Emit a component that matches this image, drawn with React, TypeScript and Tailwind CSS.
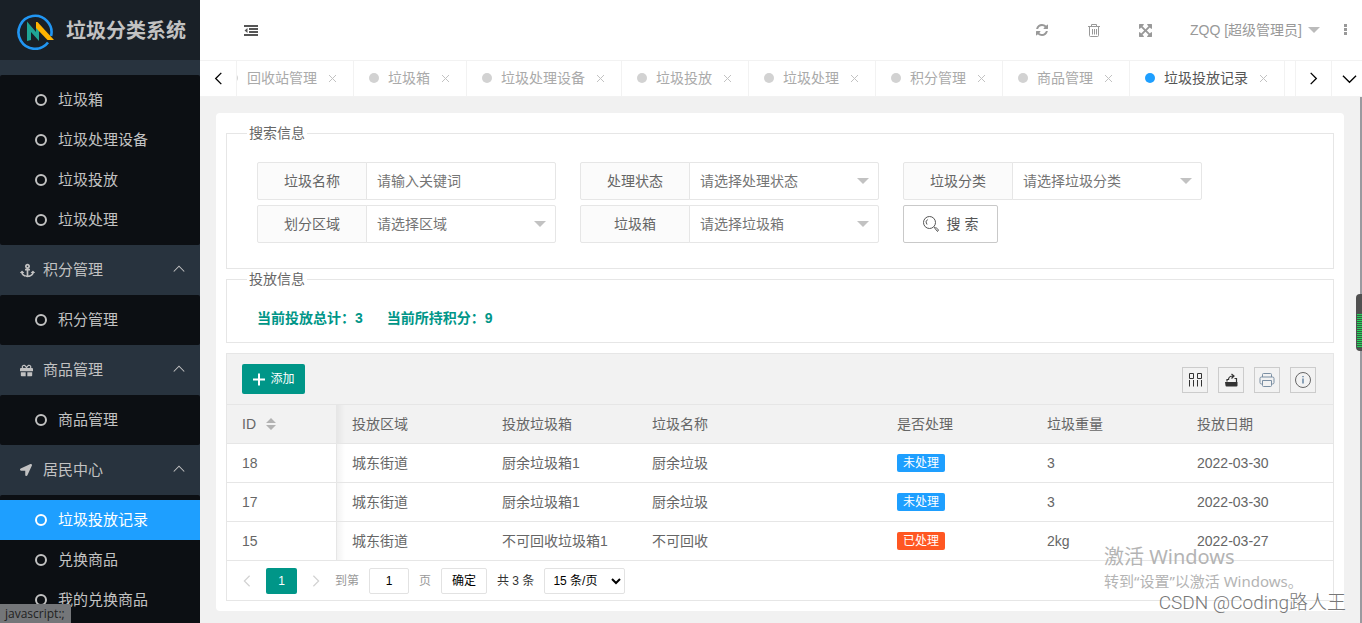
import React, { useState } from 'react';
import { FaAnchor, FaGift, FaLocationArrow } from 'react-icons/fa';

type MenuGroup = {
  title?: string;
  icon?: React.ReactNode;
  items: string[];
};

const menuGroups: MenuGroup[] = [
  { items: ['垃圾箱', '垃圾处理设备', '垃圾投放', '垃圾处理'] },
  { title: '积分管理', icon: <FaAnchor size={15} />, items: ['积分管理'] },
  { title: '商品管理', icon: <FaGift size={13} />, items: ['商品管理'] },
  { title: '居民中心', icon: <FaLocationArrow size={12} />, items: ['垃圾投放记录', '兑换商品', '我的兑换商品'] },
];

const tabs = ['回收站管理', '垃圾箱', '垃圾处理设备', '垃圾投放', '垃圾处理', '积分管理', '商品管理', '垃圾投放记录'];

const columns = [
  { title: '投放区域', width: 'w-[150px]' },
  { title: '投放垃圾箱', width: 'w-[150px]' },
  { title: '垃圾名称', width: '' },
  { title: '是否处理', width: 'w-[150px]' },
  { title: '垃圾重量', width: 'w-[150px]' },
  { title: '投放日期', width: 'w-[151px]' },
];

const records = [
  { id: 18, area: '城东街道', bin: '厨余垃圾箱1', name: '厨余垃圾', done: false, weight: '3', date: '2022-03-30' },
  { id: 17, area: '城东街道', bin: '厨余垃圾箱1', name: '厨余垃圾', done: false, weight: '3', date: '2022-03-30' },
  { id: 15, area: '城东街道', bin: '不可回收垃圾箱1', name: '不可回收', done: true, weight: '2kg', date: '2022-03-27' },
];

function Logo() {
  return (
    <svg width="38" height="38" viewBox="0 0 38 38" fill="none" className="shrink-0">
      <path d="M32 30.500A16.500 16.500 0 1 1 35.100 24" stroke="#2196f3" strokeWidth="2.600" />
      <path d="M11 9.500l9 10.500v-8l3 4v13l-8-9v8l-4 1z" fill="#1fa595" />
      <path d="M20 10h1.500L38 28h-6.500L20 16z" fill="#ffb300" />
    </svg>
  );
}

function Chevron({ d, size, className }: { d: string; size: number; className?: string }) {
  return (
    <svg width={size} height={size} viewBox="0 0 16 16" fill="none" stroke="currentColor" strokeWidth="1.4" className={className}>
      <path d={d} />
    </svg>
  );
}

const LEFT = 'M11 2L5 8l6 6';
const RIGHT = 'M5 2l6 6-6 6';
const DOWN = 'M1 5l7 7 7-7';
const UP = 'M1 10l7-7 7 7';

function RefreshIcon() {
  return (
    <svg width="12" height="12" viewBox="0 0 1536 1536" fill="currentColor">
      <path d="M1511 928q0 5-1 7-64 268-268 434.5T764 1536q-146 0-282.5-55T238 1324l-129 129q-19 19-45 19t-45-19-19-45V960q0-26 19-45t45-19h448q26 0 45 19t19 45-19 45l-137 137q71 66 161 102t187 36q134 0 250-65t186-179q11-17 53-117 8-23 30-23h192q13 0 22.5 9.5t9.5 22.5zm25-800v448q0 26-19 45t-45 19h-448q-26 0-45-19t-19-45 19-45l138-138Q969 256 768 256q-134 0-250 65T332 500q-11 17-53 117-8 23-30 23H50q-13 0-22.5-9.5T18 608v-7q65-268 270-434.5T768 0q146 0 284 55.5T1297 212l130-129q19-19 45-19t45 19 19 45z" />
    </svg>
  );
}

function ExpandIcon() {
  return (
    <svg width="13" height="13" viewBox="0 0 1536 1536" fill="currentColor">
      <path d="M1283 413L928 768l355 355 144-144q29-31 70-14 39 17 39 59v448q0 26-19 45t-45 19h-448q-42 0-59-40-17-39 14-69l144-144-355-355-355 355 144 144q31 30 14 69-17 40-59 40H64q-26 0-45-19t-19-45v-448q0-42 40-59 39-17 69 14l144 144 355-355-355-355-144 144q-19 19-45 19-12 0-24-5-40-17-40-59V64q0-26 19-45T64 0h448q42 0 59 40 17 39-14 69L413 253l355 355 355-355-144-144q-31-30-14-69 17-40 59-40h448q26 0 45 19t19 45v448q0 42-39 59-13 5-25 5-26 0-45-19z" />
    </svg>
  );
}

function TrashIcon() {
  return (
    <svg width="12" height="13" viewBox="0 0 12 13" fill="none" stroke="currentColor">
      <path d="M0 2.500h12M3.500 2.500v-2h5v2M1.500 3v8.500a1 1 0 0 0 1 1h7a1 1 0 0 0 1-1V3M4.500 5v5.500M6.500 5v5.500M8.500 5v5.500" />
    </svg>
  );
}

function Sidebar() {
  const [active, setActive] = useState('垃圾投放记录');

  return (
    <aside className="w-[200px] shrink-0 overflow-hidden bg-[#28333e] text-[15px] text-[#c2c2c2]">
      <div className="flex h-[60px] items-center gap-3 bg-[#192027] pt-[2px] pl-4">
        <Logo />
        <h1 className="text-xl font-bold whitespace-nowrap">垃圾分类系统</h1>
      </div>
      <nav className="pt-[15px]">
        {menuGroups.map((group) => (
          <div key={group.title ?? 'top'}>
            {group.title && (
              <button className="flex h-[50px] w-full items-center pr-[15px] pl-5">
                <span className="w-[23px]">{group.icon}</span>
                {group.title}
                <Chevron d={UP} size={12} className="ml-auto" />
              </button>
            )}
            <ul className="rounded-xs bg-[#0c0f13] py-[5px]">
              {group.items.map((item) => (
                <li key={item}>
                  <a
                    href="#"
                    onClick={() => setActive(item)}
                    className={`flex h-10 items-center gap-[11px] pl-[35px] ${active === item ? 'bg-[#1e9fff] text-white' : ''}`}
                  >
                    <span className="size-3 rounded-full border-2 border-current" />
                    {item}
                  </a>
                </li>
              ))}
            </ul>
          </div>
        ))}
      </nav>
    </aside>
  );
}

function Header() {
  return (
    <header className="flex h-[60px] shrink-0 items-center bg-white pr-[14px] pl-11 text-[#999]">
      <button aria-label="收起菜单" className="pt-px text-[#555]">
        <svg width="14" height="11" viewBox="0 0 14 11" fill="currentColor">
          <path d="M0 0h14v2H0zM5 3h9v2H5zM5 6h9v2H5zM0 9h14v2H0zM3.500 3v5L0.500 5.500z" />
        </svg>
      </button>
      <div className="ml-auto flex items-center">
        <button aria-label="刷新" className="mr-10"><RefreshIcon /></button>
        <button aria-label="清理" className="mr-[39px]"><TrashIcon /></button>
        <button aria-label="全屏" className="mr-[38px]"><ExpandIcon /></button>
        <button className="flex items-center gap-[6px] text-sm">
          ZQQ [超级管理员]
          <span className="border-x-[6px] border-t-[6px] border-x-transparent border-t-[#bbb]" />
        </button>
        <button aria-label="更多" className="ml-6">
          <svg width="4" height="12" viewBox="0 0 4 12" fill="currentColor">
            <path d="M0 0h3v3H0zM0 4h3v3H0zM0 8h3v3H0z" />
          </svg>
        </button>
      </div>
    </header>
  );
}

function TabBar() {
  const [current, setCurrent] = useState('垃圾投放记录');

  return (
    <div className="flex h-[37px] shrink-0 border-y border-[#f2f2f2] bg-white text-sm text-black">
      <button aria-label="向左" className="flex w-[37px] shrink-0 items-center justify-center border-r border-[#f2f2f2]">
        <Chevron d={LEFT} size={15} />
      </button>
      <div className="flex flex-1 overflow-hidden">
        <ul className="-ml-6 flex">
          {tabs.map((tab) => (
            <li key={tab} className="flex items-center border-r border-[#f2f2f2] pr-4 pb-[2px] pl-[15px]">
              <button
                onClick={() => setCurrent(tab)}
                className={`flex items-center gap-[9px] whitespace-nowrap ${current === tab ? 'text-[#555]' : 'text-[#aaa]'}`}
              >
                <span className={`size-[10px] rounded-full ${current === tab ? 'bg-[#1e9fff]' : 'bg-[#d2d2d2]'}`} />
                {tab}
              </button>
              <button aria-label={`关闭${tab}`} className="ml-[11px] pt-[2px] text-[#c2c2c2]">
                <svg width="9" height="9" viewBox="0 0 9 9" fill="none" stroke="currentColor">
                  <path d="M1 1l7 7M8 1L1 8" />
                </svg>
              </button>
            </li>
          ))}
        </ul>
      </div>
      <button aria-label="向右" className="flex w-9 shrink-0 items-center justify-center border-l border-[#f2f2f2]">
        <Chevron d={RIGHT} size={15} />
      </button>
      <button aria-label="标签操作" className="flex w-[31px] shrink-0 items-center justify-center border-l border-[#f2f2f2] pl-1">
        <Chevron d={DOWN} size={15} />
      </button>
    </div>
  );
}

function Field({ label, id, children }: { label: string; id: string; children: React.ReactNode }) {
  return (
    <div className="flex h-[38px] w-[299px]">
      <label htmlFor={id} className="flex w-[110px] items-center justify-center rounded-l-xs border border-[#e6e6e6] bg-[#fbfbfb]">
        {label}
      </label>
      {children}
    </div>
  );
}

function SelectField({ label, id, placeholder }: { label: string; id: string; placeholder: string }) {
  return (
    <Field label={label} id={id}>
      <div className="relative -ml-px flex-1">
        <select id={id} className="h-full w-full appearance-none rounded-r-xs border border-[#e6e6e6] bg-white pl-[10px] text-[#757575]">
          <option>{placeholder}</option>
        </select>
        <span className="pointer-events-none absolute top-4 right-[10px] border-x-[6px] border-t-[6px] border-x-transparent border-t-[#c2c2c2]" />
      </div>
    </Field>
  );
}

function SearchPanel() {
  return (
    <fieldset className="border border-[#e6e6e6] pb-[25px] pl-[30px]">
      <legend className="-ml-[10px] px-[2px] leading-5">搜索信息</legend>
      <div className="mt-[19px] flex flex-wrap gap-x-6 gap-y-[5px] pr-[120px]">
        <Field label="垃圾名称" id="keyword">
          <input
            id="keyword"
            placeholder="请输入关键词"
            className="-ml-px w-0 flex-1 rounded-r-xs border border-[#e6e6e6] px-[10px] placeholder:text-[#757575]"
          />
        </Field>
        <SelectField label="处理状态" id="status" placeholder="请选择处理状态" />
        <SelectField label="垃圾分类" id="category" placeholder="请选择垃圾分类" />
        <SelectField label="划分区域" id="area" placeholder="请选择区域" />
        <SelectField label="垃圾箱" id="bin" placeholder="请选择垃圾箱" />
        <button className="flex h-[38px] w-[95px] items-center justify-center gap-2 rounded-xs border border-[#c9c9c9] bg-white text-[#555]">
          <svg width="16" height="16" viewBox="0 0 16 16" fill="none" stroke="currentColor">
            <circle cx="6.500" cy="6.500" r="6" />
            <path d="M4.500 3.500a3.500 3.500 0 0 0-.5 5M11 11l1.500 1M12 12.500l1-1 2.500 2.500-1 1.500z" />
          </svg>
          搜 索
        </button>
      </div>
    </fieldset>
  );
}

function StatsPanel() {
  return (
    <fieldset className="border border-[#e6e6e6] pl-[30px]">
      <legend className="-ml-[10px] px-[2px] leading-5">投放信息</legend>
      <div className="flex gap-6 pt-[19px] pb-[14px] leading-5 font-bold text-[#009688]">
        <span>当前投放总计：3</span>
        <span>当前所持积分：9</span>
      </div>
    </fieldset>
  );
}

const toolButtons = [
  {
    label: '筛选列',
    icon: (
      <svg width="14" height="14" viewBox="0 0 14 14" fill="none" stroke="#333">
        <path d="M1.500 .500h4v5h-4zM9.500 .500h4v5h-4zM1.500 7v6.500M5.500 7v6.500M9.500 7v6.500M13.500 7v6.500" />
      </svg>
    ),
  },
  {
    label: '导出',
    icon: (
      <svg width="14" height="14" viewBox="0 0 14 14" fill="#333">
        <path d="M1 9h12.500v3.500a1 1 0 0 1-1 1h-10a1 1 0 0 1-1-1z" />
        <path d="M3 8.500V6.500h2M10.500 5.500h2v3.500M4.500 7c0-3 1.500-4 4.500-4M7.500 1L10 3 7.500 5.500" fill="none" stroke="#333" strokeWidth="1.200" />
      </svg>
    ),
  },
  {
    label: '打印',
    icon: (
      <svg width="16" height="16" viewBox="0 0 16 16" fill="none" stroke="#7b8fa3">
        <path d="M3.500 5V2.500a1 1 0 0 1 1-1h7a1 1 0 0 1 1 1V5M3.500 12h-1a1.500 1.500 0 0 1-1.500-1.500v-4A1.500 1.500 0 0 1 2.500 5h11A1.500 1.500 0 0 1 15 6.500v4a1.500 1.500 0 0 1-1.500 1.500h-1M3.500 8.500h9v5a1 1 0 0 1-1 1h-7a1 1 0 0 1-1-1z" />
      </svg>
    ),
  },
  {
    label: '提示',
    icon: (
      <svg width="16" height="16" viewBox="0 0 16 16" fill="none" stroke="#666">
        <circle cx="8" cy="8" r="7.500" />
        <path d="M8 6.500v5M8 4v1.200" stroke="#5d7f9e" strokeWidth="1.400" />
      </svg>
    ),
  },
];

function RecordTable() {
  const idCell =
    'relative border-r border-b border-[#e6e6e6] px-[15px] text-left font-normal after:absolute after:inset-y-0 after:left-full after:ml-px after:w-2 after:bg-linear-to-r after:from-black/5 after:to-transparent';
  const cell = 'border-b border-[#e6e6e6] px-[15px] text-left font-normal whitespace-nowrap';

  return (
    <section className="mt-[10px] border border-[#e6e6e6]">
      <div className="flex h-[51px] items-center border-b border-[#e6e6e6] bg-[#f2f2f2] pr-[17px] pl-[15px]">
        <button className="flex h-[30px] w-[63px] items-center justify-center gap-1 rounded-xs bg-[#009688] text-xs text-white">
          <svg width="14" height="14" viewBox="0 0 14 14" stroke="currentColor" strokeWidth="2">
            <path d="M1 7.500h12M7 1.500v12" />
          </svg>
          添加
        </button>
        <div className="ml-auto flex gap-[10px] pt-px">
          {toolButtons.map((tool) => (
            <button key={tool.label} aria-label={tool.label} className="flex size-[26px] items-center justify-center border border-[#ccc]">
              {tool.icon}
            </button>
          ))}
        </div>
      </div>
      <table className="w-full table-fixed border-separate border-spacing-0">
        <thead>
          <tr className="h-[39px] bg-[#f2f2f2]">
            <th className={`w-[110px] ${idCell}`}>
              <span className="flex items-center gap-[10px]">
                ID
                <button aria-label="排序">
                  <svg width="10" height="12" viewBox="0 0 10 12" fill="#b2b2b2">
                    <path d="M0 5l5-5 5 5zM0 7h10l-5 5z" />
                  </svg>
                </button>
              </span>
            </th>
            {columns.map((column) => (
              <th key={column.title} className={`${column.width} ${cell}`}>{column.title}</th>
            ))}
          </tr>
        </thead>
        <tbody>
          {records.map((record) => (
            <tr key={record.id} className="h-[39px]">
              <td className={idCell}>{record.id}</td>
              <td className={cell}>{record.area}</td>
              <td className={cell}>{record.bin}</td>
              <td className={cell}>{record.name}</td>
              <td className={cell}>
                <span className={`flex h-[18px] w-12 items-center justify-center rounded-xs text-xs text-white ${record.done ? 'bg-[#ff5722]' : 'bg-[#1e9fff]'}`}>
                  {record.done ? '已处理' : '未处理'}
                </span>
              </td>
              <td className={cell}>{record.weight}</td>
              <td className={cell}>{record.date}</td>
            </tr>
          ))}
        </tbody>
      </table>
      <div className="flex h-[39px] items-center pl-[13px] text-xs text-[#333]">
        <button aria-label="上一页" className="text-[#d2d2d2]"><Chevron d={LEFT} size={14} /></button>
        <button className="mx-3 h-[26px] w-[31px] rounded-xs bg-[#009688] text-white">1</button>
        <button aria-label="下一页" className="text-[#d2d2d2]"><Chevron d={RIGHT} size={14} /></button>
        <label htmlFor="page" className="mr-[10px] ml-3 text-[#999]">到第</label>
        <input id="page" defaultValue="1" className="h-[26px] w-10 rounded-xs border border-[#e2e2e2] text-center text-black" />
        <span className="mx-[10px] text-[#999]">页</span>
        <button className="h-[26px] w-[46px] rounded-xs border border-[#e2e2e2] text-black">确定</button>
        <span className="mx-[10px]">共 3 条</span>
        <select aria-label="每页条数" className="h-[26px] w-[81px] rounded-xs border border-[#e2e2e2] bg-white pl-1 text-black">
          <option>15 条/页</option>
        </select>
      </div>
    </section>
  );
}

export default function App() {
  return (
    <div className="relative flex h-screen overflow-hidden bg-[#f1f1f1] font-['Liberation_Sans','Noto_Sans_CJK_SC',sans-serif]">
      <Sidebar />
      <div className="flex min-w-0 flex-1 flex-col text-sm text-[#666]">
        <Header />
        <TabBar />
        <main className="flex-1 overflow-hidden border-r-2 border-[#9a9a9f] pt-4 pr-4 pl-4">
          <div className="rounded bg-white p-[10px]">
            <SearchPanel />
            <StatsPanel />
            <RecordTable />
          </div>
        </main>
      </div>

      {/* system meter docked on the right edge */}
      <div className="absolute top-[294px] right-0 h-[57px] w-[6px] rounded-l bg-[#505050] pt-5 pb-[3px] pl-px">
        <div className="h-full bg-[repeating-linear-gradient(#22d35a_0_1px,#3a5a44_1px_2px)]" />
      </div>

      <div className="pointer-events-none absolute top-[543px] left-[1104px] font-['Noto_Sans','Noto_Sans_CJK_SC',sans-serif] whitespace-nowrap text-[#b4b4b4]">
        <p className="text-xl leading-7">激活 Windows</p>
        <p className="text-[15px] leading-5">转到“设置”以激活 Windows。</p>
      </div>
      <p className="pointer-events-none absolute right-4 bottom-1 font-['Roboto','Noto_Sans_CJK_SC',sans-serif] text-[19px] leading-8 font-light whitespace-nowrap text-[#777]">
        CSDN @Coding路人王
      </p>
      <div className="absolute bottom-0 left-0 h-[19px] w-[71px] rounded-tr-xs bg-[#747679] pl-[5px] font-['Open_Sans',sans-serif] text-xs leading-[19px] text-[#222]">
        javascript:;
      </div>
    </div>
  );
}
